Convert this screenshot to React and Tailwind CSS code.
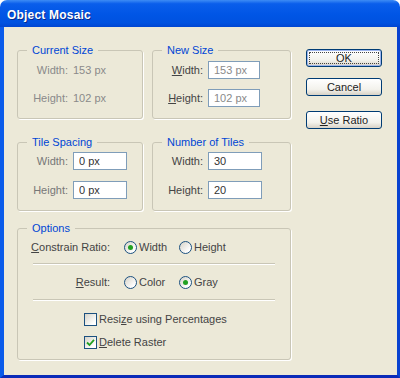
const ui = "font-['Liberation_Sans',Arial,sans-serif]";

function Group({ title, className, children }) {
  return (
    <fieldset className={`border border-[#C9C6B6] rounded-[3px] shadow-[1px_1px_0_#fff] ${className}`}>
      <legend className="ml-[9px] px-[5px] text-[#0046D5] leading-[14px]">{title}</legend>
      {children}
    </fieldset>
  );
}

function Field({ value, w, dim }) {
  return (
    <input
      readOnly
      value={value}
      className={`h-[18px] ${w} bg-white border border-[#7F9DB9] pl-[5px] outline-none ${dim ? "text-[#8A8A8A]" : "text-[#333]"}`}
    />
  );
}

function Radio({ on }) {
  return (
    <span className="w-[13px] h-[13px] shrink-0 rounded-full border border-[#1C5180] bg-[linear-gradient(135deg,#D6D3C8,#fff_80%)] flex items-center justify-center">
      {on && <span className="w-[5px] h-[5px] rounded-full bg-[#21A121]" />}
    </span>
  );
}

function Check({ on }) {
  return (
    <span className="w-[13px] h-[13px] shrink-0 border border-[#1C5180] bg-[linear-gradient(135deg,#D6D3C8,#fff_80%)] flex items-center justify-center">
      {on && (
        <svg width="9" height="9" viewBox="0 0 9 9">
          <path d="M1 4.5 L3.5 7 L8 1.8" fill="none" stroke="#21A121" strokeWidth="1.8" />
        </svg>
      )}
    </span>
  );
}

function Btn({ children, def }) {
  return (
    <button
      className={`relative w-[76px] h-[18px] rounded-[3px] border border-[#003C74] bg-[linear-gradient(to_bottom,#fff,#F3F2EC_65%,#D8D2C6)] text-[#222] text-[11px] leading-none flex items-center justify-center ${def ? "shadow-[inset_0_0_0_1px_#9DB5EE]" : ""}`}
    >
      {def && <span className="absolute inset-[2px] border border-dotted border-[#444]" />}
      {children}
    </button>
  );
}

function Sep() {
  return <div className="mx-[15px] h-[2px] border-t border-[#C9C6B6] border-b border-b-white" />;
}

export default function App() {
  return (
    <div className={`w-[400px] h-[378px] flex flex-col rounded-t-[7px] overflow-hidden text-[11px] ${ui}`}>
      <div className="h-[27px] shrink-0 flex items-center pl-[7px] pt-[2px] bg-[linear-gradient(to_bottom,#3D8CF5,#0A5EEB_14%,#0055E5_55%,#0052E0_85%,#0046D2)]">
        <span className="text-white font-bold text-[12px] tracking-[0.2px] [text-shadow:1px_1px_0_#0B2A8A]">Object Mosaic</span>
      </div>

      <div className="flex-1 flex items-start bg-[#ECE9D8] border-l-[4px] border-r-[3px] border-b-[3px] border-l-[#0A5BEA] border-r-[#0842D0] border-b-[#0A2BB8] pt-[16px] pl-[13px] text-[#444]">
        <div className="w-[274px] flex flex-col">
          <div className="flex gap-[9px]">
            <Group title="Current Size" className="w-[126px] pt-[4px] pb-[11px]">
              <div className="flex flex-col gap-[10px] text-[#8A8A8A]">
                <div className="h-[18px] flex items-center">
                  <span className="w-[50px] text-right">Width:</span>
                  <span className="ml-[5px]">153 px</span>
                </div>
                <div className="h-[18px] flex items-center">
                  <span className="w-[50px] text-right">Height:</span>
                  <span className="ml-[5px]">102 px</span>
                </div>
              </div>
            </Group>
            <Group title="New Size" className="w-[139px] pt-[4px] pb-[11px]">
              <div className="flex flex-col gap-[10px]">
                <div className="h-[18px] flex items-center">
                  <span className="w-[50px] text-right"><u>W</u>idth:</span>
                  <span className="ml-[5px]"><Field value="153 px" w="w-[52px]" dim /></span>
                </div>
                <div className="h-[18px] flex items-center">
                  <span className="w-[50px] text-right"><u>H</u>eight:</span>
                  <span className="ml-[5px]"><Field value="102 px" w="w-[52px]" dim /></span>
                </div>
              </div>
            </Group>
          </div>

          <div className="flex gap-[9px] mt-[16px]">
            <Group title="Tile Spacing" className="w-[126px] pt-[3px] pb-[11px]">
              <div className="flex flex-col gap-[11px]">
                <div className="h-[18px] flex items-center">
                  <span className="w-[50px] text-right text-[#777]">Width:</span>
                  <span className="ml-[5px]"><Field value="0 px" w="w-[54px]" /></span>
                </div>
                <div className="h-[18px] flex items-center">
                  <span className="w-[50px] text-right text-[#777]">Height:</span>
                  <span className="ml-[5px]"><Field value="0 px" w="w-[54px]" /></span>
                </div>
              </div>
            </Group>
            <Group title="Number of Tiles" className="w-[139px] pt-[3px] pb-[11px]">
              <div className="flex flex-col gap-[11px]">
                <div className="h-[18px] flex items-center">
                  <span className="w-[50px] text-right">Width:</span>
                  <span className="ml-[5px]"><Field value="30" w="w-[54px]" /></span>
                </div>
                <div className="h-[18px] flex items-center">
                  <span className="w-[50px] text-right">Height:</span>
                  <span className="ml-[5px]"><Field value="20" w="w-[54px]" /></span>
                </div>
              </div>
            </Group>
          </div>

          <Group title="Options" className="mt-[10px] pt-[4px] pb-[10px]">
            <div className="flex flex-col">
              <div className="h-[16px] flex items-center">
                <span className="w-[92px] text-right"><u>C</u>onstrain Ratio:</span>
                <label className="ml-[14px] w-[55px] flex items-center gap-[2px]"><Radio on /><span>Width</span></label>
                <label className="flex items-center gap-[2px]"><Radio /><span>Height</span></label>
              </div>
              <div className="mt-[8px]"><Sep /></div>
              <div className="mt-[9px] h-[16px] flex items-center">
                <span className="w-[92px] text-right"><u>R</u>esult:</span>
                <label className="ml-[14px] w-[55px] flex items-center gap-[2px]"><Radio /><span>Color</span></label>
                <label className="flex items-center gap-[2px]"><Radio on /><span>Gray</span></label>
              </div>
              <div className="mt-[9px]"><Sep /></div>
              <label className="mt-[11px] h-[14px] pl-[66px] flex items-center gap-[2px]">
                <Check /><span>Resi<u>z</u>e using Percentages</span>
              </label>
              <label className="mt-[9px] h-[14px] pl-[66px] flex items-center gap-[2px]">
                <Check on /><span><u>D</u>elete Raster</span>
              </label>
            </div>
          </Group>
        </div>

        <div className="ml-[15px] mt-[6px] flex flex-col">
          <Btn def>OK</Btn>
          <div className="mt-[11px]"><Btn>Cancel</Btn></div>
          <div className="mt-[15px]"><Btn><span><u>U</u>se Ratio</span></Btn></div>
        </div>
      </div>
    </div>
  );
}
